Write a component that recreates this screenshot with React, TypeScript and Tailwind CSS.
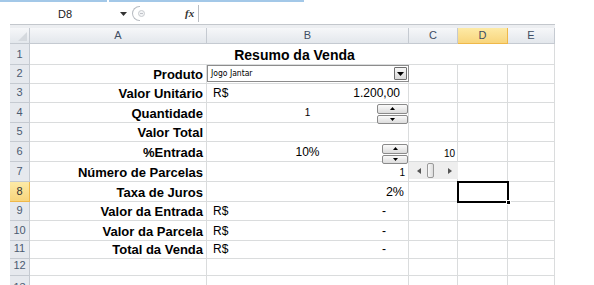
import React from "react";

const rowH = [21, 19, 19, 20, 19, 20, 20, 20, 19, 20, 18, 17];

type Row = {
  a?: string;
  bLeft?: string;
  bRight?: React.ReactNode;
  bRightCls?: string;
  bCenter?: string;
  c?: string;
};

const data: Row[] = [
  {},
  { a: "Produto" },
  { a: "Valor Unitário", bLeft: "R$", bRight: "1.200,00", bRightCls: "pr-[8px] text-[12px]" },
  { a: "Quantidade", bCenter: "1" },
  { a: "Valor Total" },
  { a: "%Entrada", bCenter: "10%", c: "10" },
  { a: "Número de Parcelas", bRight: "1", bRightCls: "pr-[3px] text-[10px]" },
  { a: "Taxa de Juros", bRight: "2%", bRightCls: "pr-[4px] text-[12.5px]" },
  { a: "Valor da Entrada", bLeft: "R$", bRight: "-", bRightCls: "pr-[22px] text-[12px]" },
  { a: "Valor da Parcela", bLeft: "R$", bRight: "-", bRightCls: "pr-[22px] text-[12px]" },
  { a: "Total da Venda", bLeft: "R$", bRight: "-", bRightCls: "pr-[22px] text-[12px]" },
  {},
];

const font = { fontFamily: '"Liberation Sans", Arial, sans-serif' };

function Spin({ cls }: { cls: string }) {
  const btn =
    "flex-1 flex items-center justify-center rounded-[2px] border border-[#8a8a8a] bg-gradient-to-b from-[#fbfbfb] to-[#dcdcdc]";
  return (
    <div className={"absolute flex flex-col gap-[1px] " + cls}>
      <div className={btn}>
        <svg width="5" height="3" viewBox="0 0 5 3">
          <path d="M2.5 0 L5 3 L0 3 Z" fill="#000" />
        </svg>
      </div>
      <div className={btn}>
        <svg width="5" height="3" viewBox="0 0 5 3">
          <path d="M0 0 L5 0 L2.5 3 Z" fill="#000" />
        </svg>
      </div>
    </div>
  );
}

export default function App() {
  const hdrCell =
    "h-full flex items-center justify-center border-r border-b border-[#c5cad1] bg-gradient-to-b from-[#f6f7f9] to-[#e3e7ec] text-[11px] text-[#3e4d63]";
  return (
    <div className="relative w-[594px] h-[285px] overflow-hidden bg-white" style={font}>
      {/* top blue strip */}
      <div className="flex h-[2px]">
        <div className="w-[107px] bg-[#a3c8e8]" />
        <div className="w-[2px] bg-white" />
        <div className="w-[195px] bg-[#a3c8e8]" />
      </div>
      {/* formula bar */}
      <div className="flex h-[22px] items-center pl-[58px] text-[11px] text-[#1a1a1a]">
        <span className="w-[62px] pt-[2px]">D8</span>
        <svg width="7" height="4" viewBox="0 0 7 4" className="mt-[1px]">
          <path d="M0 0 L7 0 L3.5 4 Z" fill="#333" />
        </svg>
        <div className="ml-[5px] h-[15px] w-[8px] rounded-l-[8px] border-l border-t border-b border-[#b8bcc2]" />
        <div className="-ml-[2px] h-[7px] w-[7px] rounded-full border border-[#c9ccd0] bg-[#f2f3f5] flex items-center justify-center">
          <span className="block w-[3px] border-t border-[#c0c3c8]" />
        </div>
        <span
          className="ml-[40px] text-[11px] italic font-bold text-[#333]"
          style={{ fontFamily: '"Liberation Serif", serif' }}
        >
          fx
        </span>
        <div className="ml-[4px] h-[17px] w-[1px] bg-[#b9bdc3]" />
      </div>
      {/* gray band above headers */}
      <div className="ml-[10px] w-[545px] h-[4px] border-t border-[#c3c7cc] bg-[#eceef1]" />
      {/* grid */}
      <div className="relative ml-[10px] w-[545px]">
        {/* header row */}
        <div className="flex h-[16px]">
          <div className={hdrCell + " w-[20px] items-end justify-end"}>
            <svg width="9" height="9" viewBox="0 0 9 9" className="mb-[2px] mr-[2px]">
              <path d="M9 0 L9 9 L0 9 Z" fill="#d5d9de" />
            </svg>
          </div>
          <div className={hdrCell + " w-[177px]"}>A</div>
          <div className={hdrCell + " w-[202px]"}>B</div>
          <div className={hdrCell + " w-[49px]"}>C</div>
          <div className="h-full w-[50px] flex items-center justify-center border-r border-b border-[#efb84a] bg-gradient-to-b from-[#fdeaa6] to-[#f8d57c] text-[11px] text-[#3e4d63]">
            D
          </div>
          <div className={hdrCell + " w-[47px]"}>E</div>
        </div>
        {data.map((r, i) => {
          const h = rowH[i];
          const sel = i === 7;
          return (
            <div key={i} className="flex" style={{ height: h }}>
              <div
                className={
                  "w-[20px] h-full flex items-end justify-center pb-[2px] text-[11px] border-r border-b " +
                  (sel
                    ? "bg-gradient-to-b from-[#fdeaa6] to-[#f8d57c] border-[#efb84a] text-[#333]"
                    : "bg-[#e6e9ee] border-[#c5cad1] text-[#4b5b71]")
                }
              >
                {i + 1}
              </div>
              {i === 0 ? (
                <div className="w-[525px] h-full flex items-end justify-center pb-[2px] pl-[5px] border-r border-b border-[#dadcdd] text-[14px] font-bold leading-none text-black">
                  Resumo da Venda
                </div>
              ) : (
                <>
                  <div className="w-[177px] h-full flex items-end justify-end pr-[3px] pb-[2px] border-r border-b border-[#dadcdd] text-[13px] font-bold leading-none text-black">
                    {r.a}
                  </div>
                  <div className="w-[202px] h-full flex items-end justify-between pb-[3px] border-r border-b border-[#dadcdd] leading-none text-black">
                    {r.bCenter ? (
                      <span
                        className={
                          "w-full text-center " +
                          (r.bCenter === "1" ? "text-[10px] pb-[1px]" : "text-[12px]")
                        }
                      >
                        {r.bCenter}
                      </span>
                    ) : (
                      <>
                        <span className="pl-[6px] text-[12px]">{r.bLeft}</span>
                        <span className={r.bRightCls}>{r.bRight}</span>
                      </>
                    )}
                  </div>
                  <div className="w-[49px] h-full flex items-end justify-end pr-[2px] pb-[2px] border-r border-b border-[#dadcdd] text-[10px] leading-none text-black">
                    {r.c}
                  </div>
                  <div className="w-[50px] h-full border-r border-b border-[#dadcdd]" />
                  <div className="w-[47px] h-full border-r border-b border-[#dadcdd]" />
                </>
              )}
            </div>
          );
        })}
        {/* row 13 partial */}
        <div className="flex h-[12px]">
          <div className="w-[20px] h-full flex items-start justify-center pt-[3px] text-[11px] text-[#4b5b71] bg-[#e6e9ee] border-r border-[#c5cad1]">
            13
          </div>
          <div className="w-[177px] h-full border-r border-[#dadcdd]" />
          <div className="w-[202px] h-full border-r border-[#dadcdd]" />
          <div className="w-[49px] h-full border-r border-[#dadcdd]" />
          <div className="w-[50px] h-full border-r border-[#dadcdd]" />
          <div className="w-[47px] h-full border-r border-[#dadcdd]" />
        </div>

        {/* combobox */}
        <div className="absolute left-[197px] top-[37px] w-[202px] h-[17px] flex items-center border border-[#8c8c8c] bg-white">
          <span className="pl-[3px] text-[8.5px] text-black" style={{ fontFamily: '"DejaVu Sans Condensed", "Liberation Sans", sans-serif' }}>
            Jogo Jantar
          </span>
          <div className="ml-auto mr-[1px] h-[13px] w-[13px] flex items-center justify-center rounded-[1px] border border-[#6e6e6e] bg-gradient-to-b from-[#f7f7f7] to-[#d9d9d9]">
            <svg width="7" height="4" viewBox="0 0 7 4">
              <path d="M0 0 L7 0 L3.5 4 Z" fill="#000" />
            </svg>
          </div>
        </div>

        <Spin cls="left-[367px] top-[76px] w-[31px] h-[20px]" />
        <Spin cls="left-[372px] top-[116px] w-[26px] h-[20px]" />

        {/* scrollbar */}
        <div className="absolute left-[399px] top-[134px] w-[49px] h-[17px] flex items-center bg-[#eeeeee]">
          <svg width="4" height="6" viewBox="0 0 4 6" className="ml-[8px]">
            <path d="M4 0 L4 6 L0 3 Z" fill="#555" />
          </svg>
          <div className="ml-[6px] h-[15px] w-[7px] rounded-[2px] border border-[#9a9a9a] bg-gradient-to-r from-[#fafafa] to-[#dcdcdc]" />
          <svg width="4" height="6" viewBox="0 0 4 6" className="ml-[14px]">
            <path d="M0 0 L4 3 L0 6 Z" fill="#555" />
          </svg>
        </div>

        {/* selected cell D8 */}
        <div className="absolute left-[447px] top-[153px] w-[52px] h-[22px] border-2 border-black">
          <div className="absolute -right-[4px] -bottom-[4px] w-[5px] h-[5px] bg-black border border-white" />
        </div>
      </div>
    </div>
  );
}
